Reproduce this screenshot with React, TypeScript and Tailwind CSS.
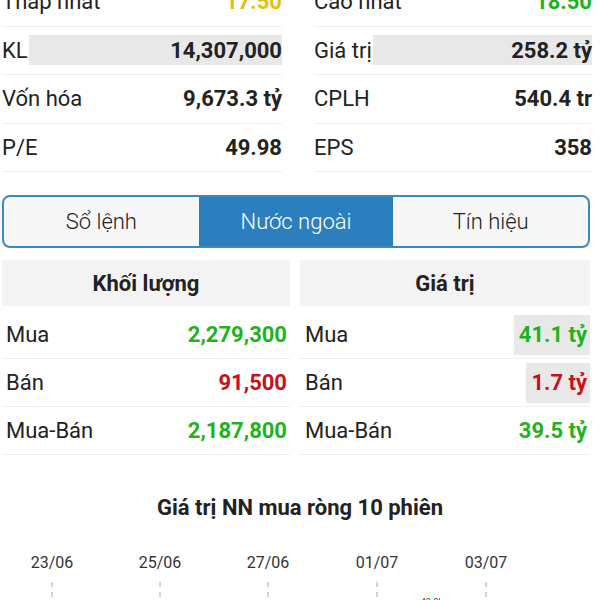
import React from 'react';

/* ------------------------------- data ------------------------------------ */

type Stat = { label: string; value: string; color?: string; bar?: boolean };

const LEFT: Stat[] = [
  { label: 'Thấp nhất', value: '17.50', color: 'text-[#e8bd0c]' },
  { label: 'KL', value: '14,307,000', bar: true },
  { label: 'Vốn hóa', value: '9,673.3 tỷ' },
  { label: 'P/E', value: '49.98' },
];

const RIGHT: Stat[] = [
  { label: 'Cao nhất', value: '18.50', color: 'text-[#1fb21f]' },
  { label: 'Giá trị', value: '258.2 tỷ', bar: true },
  { label: 'CPLH', value: '540.4 tr' },
  { label: 'EPS', value: '358' },
];

const TABS = ['Sổ lệnh', 'Nước ngoài', 'Tín hiệu'];

type Flow = { label: string; vol: string; val: string; up: boolean; box?: boolean };

const FLOWS: Flow[] = [
  { label: 'Mua', vol: '2,279,300', val: '41.1 tỷ', up: true, box: true },
  { label: 'Bán', vol: '91,500', val: '1.7 tỷ', up: false, box: true },
  { label: 'Mua-Bán', vol: '2,187,800', val: '39.5 tỷ', up: true },
];

const DATES = [
  { d: '23/06', x: 52 },
  { d: '25/06', x: 160 },
  { d: '27/06', x: 268 },
  { d: '01/07', x: 377 },
  { d: '03/07', x: 486 },
];

/* ------------------------------ pieces ----------------------------------- */

function StatColumn({ rows }: { rows: Stat[] }) {
  return (
    <div className="flex flex-col">
      {rows.map((r) => (
        <div
          key={r.label}
          className="flex h-[48.5px] items-center border-b border-[#efefef]"
        >
          <span className="text-[22px] text-[#222]">{r.label}</span>
          {r.bar ? (
            <div className="ml-[1px] flex h-[30px] flex-1 items-center justify-end bg-[#e8e8e8]">
              <span className="text-[22px] font-bold text-[#222]">{r.value}</span>
            </div>
          ) : (
            <span
              className={`ml-auto text-[22px] font-bold ${r.color ?? 'text-[#222]'}`}
            >
              {r.value}
            </span>
          )}
        </div>
      ))}
    </div>
  );
}

/* -------------------------------- page ----------------------------------- */

export default function App() {
  return (
    <div
      className="h-[600px] w-[600px] overflow-hidden bg-white"
      style={{ fontFamily: 'Roboto, "Noto Sans", sans-serif' }}
    >
      {/* top stats, first row scrolled half off */}
      <div className="-mt-[22px] grid grid-cols-[280px_278px] gap-x-[32px] pl-[2px]">
        <StatColumn rows={LEFT} />
        <StatColumn rows={RIGHT} />
      </div>

      {/* tabs */}
      <div className="mx-[2px] mt-[23px] flex h-[53px] w-[588px] overflow-hidden rounded-[8px] border-2 border-[#3a88c2] bg-[#f7f7f7]">
        {TABS.map((t, i) => (
          <div
            key={t}
            className={
              i === 1
                ? 'flex flex-1 items-center justify-center bg-[#2b7fbe] text-[22px] font-light text-white'
                : 'flex flex-1 items-center justify-center text-[22px] font-light text-[#222]'
            }
          >
            {t}
          </div>
        ))}
      </div>

      {/* foreign flow */}
      <div className="mt-[12px] grid grid-cols-[288px_290px] gap-x-[10px] pl-[2px]">
        <div className="flex h-[46px] items-center justify-center bg-[#f3f3f3] text-[22px] font-bold text-[#222]">
          Khối lượng
        </div>
        <div className="flex h-[46px] items-center justify-center bg-[#f3f3f3] text-[22px] font-bold text-[#222]">
          Giá trị
        </div>

        <div className="mt-[5px] flex flex-col">
          {FLOWS.map((f) => (
            <div
              key={f.label}
              className="flex h-[48px] items-center border-b border-[#efefef] pl-[4px] pr-[3px]"
            >
              <span className="text-[22px] text-[#222]">{f.label}</span>
              <span
                className={`ml-auto text-[22px] font-bold ${
                  f.up ? 'text-[#1fb21f]' : 'text-[#c8101a]'
                }`}
              >
                {f.vol}
              </span>
            </div>
          ))}
        </div>
        <div className="mt-[5px] flex flex-col">
          {FLOWS.map((f) => (
            <div
              key={f.label}
              className="flex h-[48px] items-center border-b border-[#efefef] pl-[5px]"
            >
              <span className="text-[22px] text-[#222]">{f.label}</span>
              <span
                className={`ml-auto flex h-[40px] items-center pl-[5px] pr-[3px] text-[22px] font-bold ${
                  f.up ? 'text-[#1fb21f]' : 'text-[#c8101a]'
                } ${f.box ? 'bg-[#e8e8e8]' : ''}`}
              >
                {f.val}
              </span>
            </div>
          ))}
        </div>
      </div>

      {/* chart */}
      <div className="mt-[36px] text-center text-[22px] font-bold text-[#222]">
        Giá trị NN mua ròng 10 phiên
      </div>
      <svg width="600" height="80" className="mt-[23px] block">
        {DATES.map((p) => (
          <g key={p.d}>
            <text
              x={p.x}
              y={21}
              textAnchor="middle"
              fontSize="16"
              fill="#333"
              fontFamily="Roboto, sans-serif"
            >
              {p.d}
            </text>
            <line
              x1={p.x}
              y1={35}
              x2={p.x}
              y2={80}
              stroke="#aaa"
              strokeWidth="1"
              strokeDasharray="5 5"
            />
          </g>
        ))}
        <text x={432} y={58} textAnchor="middle" fontSize="9" fill="#444" fontFamily="Roboto, sans-serif">
          48.0b
        </text>
      </svg>
    </div>
  );
}
